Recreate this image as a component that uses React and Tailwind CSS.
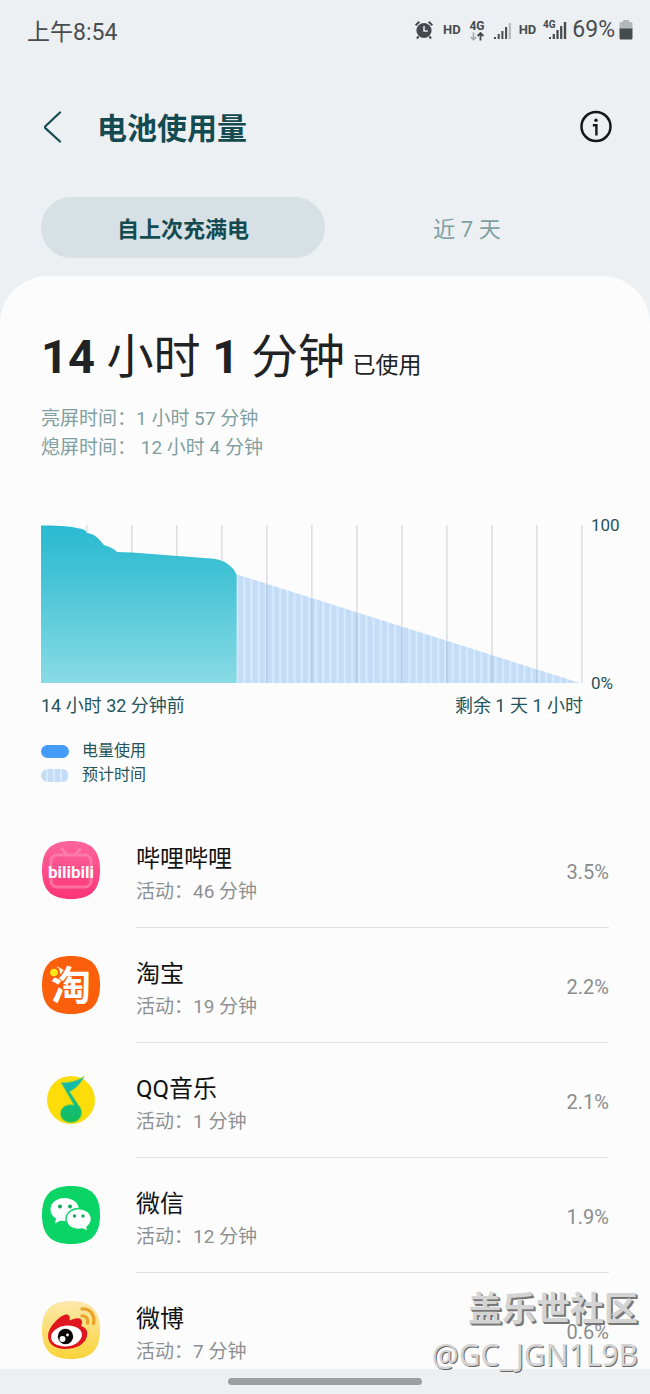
import React from "react";

const INK = "#454a4d";

function AlarmIcon() {
  return (
    <svg className="h-5 w-5" viewBox="0 0 20 20" aria-hidden="true">
      <circle cx="10" cy="10.5" r="7.6" fill={INK} />
      <path d="M1.6 5.2 5.4 1.8M18.4 5.2 14.6 1.8M4.6 16.2 3 18.6M15.4 16.2 17 18.6" stroke={INK} strokeWidth="2" />
      <path d="M10 6v5h3.8" fill="none" stroke="#ecf0f3" strokeWidth="1.5" />
    </svg>
  );
}

function NetworkIcon() {
  return (
    <svg className="h-6 w-[18px]" viewBox="0 -4 18 24" aria-hidden="true">
      <text x="9" y="8" textAnchor="middle" fontFamily="Roboto, sans-serif" fontWeight="700" fontSize="12" fill={INK}>4G</text>
      <path d="M5.5 10.5v7M2.8 15l2.7 2.8L8.2 15" fill="none" stroke="#a3a8ab" strokeWidth="1.6" />
      <path d="M12.5 18.5v-7M9.6 14l2.9-3 2.9 3" fill="none" stroke={INK} strokeWidth="1.8" />
    </svg>
  );
}

function Bars() {
  const tops = [17, 14, 11, 7, 3];
  return tops.map((y, i) => (
    <rect key={i} x={i * 3.7} y={y} width="2" height={19 - y} fill={i === 4 ? "#b2b7ba" : INK} />
  ));
}

function StatusBar() {
  return (
    <div className="flex h-16 items-center justify-between pl-[27px] pr-[17px] text-[23px] text-[#484c4f]">
      <time className="pt-[3px]">上午8:54</time>
      <div className="-mt-1 flex items-center">
        <AlarmIcon />
        <span className="ml-[9px] text-[13px] font-bold">HD</span>
        <span className="ml-[7px] flex"><NetworkIcon /></span>
        <svg className="ml-2 h-5 w-[18px]" viewBox="0 0 18 20" aria-hidden="true">
          <Bars />
        </svg>
        <span className="ml-[7px] text-[13px] font-bold">HD</span>
        <svg className="ml-[7px] h-6 w-6" viewBox="0 -2 24 24" aria-hidden="true">
          <text x="0" y="8" fontFamily="Roboto, sans-serif" fontWeight="700" fontSize="10" fill={INK}>4G</text>
          <rect x="6" y="17" width="2" height="2" fill={INK} />
          <rect x="9.7" y="14" width="2.2" height="5" fill={INK} />
          <rect x="13.4" y="10" width="2.2" height="9" fill={INK} />
          <rect x="17.1" y="6" width="2.2" height="13" fill={INK} />
          <rect x="20.8" y="2" width="2.4" height="17" fill={INK} />
        </svg>
        <span className="ml-[5px] leading-6">69%</span>
        <svg className="ml-1 h-5 w-[14px]" viewBox="0 0 14 20" aria-hidden="true">
          <path d="M4 0h6v2h2q1.5 0 1.5 1.500V9H.5V3.500Q.5 2 2 2h2z" fill="#b2b7ba" />
          <path d="M.5 8.500h13V18q0 1.500-1.500 1.500H2Q.5 19.500.5 18z" fill={INK} />
        </svg>
      </div>
    </div>
  );
}

function Header() {
  return (
    <header className="flex items-center pl-9 pr-9 pt-[31px]">
      <button type="button" aria-label="返回" className="flex h-16 w-8 items-center justify-center">
        <svg className="h-8 w-5" viewBox="0 0 20 32" fill="none" stroke="#144b50" strokeWidth="2.2" strokeLinecap="round" strokeLinejoin="round">
          <path d="M18 1.500 3.600 15q-1.200 1.200 0 2.400L18 30.500" />
        </svg>
      </button>
      <h1 className="ml-[29px] flex-1 pt-1 text-[30px] font-bold leading-10 text-[#144b50]">电池使用量</h1>
      <button type="button" aria-label="信息" className="flex h-16 w-9 items-center justify-center">
        <svg className="h-9 w-9" viewBox="0 0 36 36" fill="none" stroke="#151819">
          <circle cx="18" cy="17.500" r="14.500" strokeWidth="2.500" />
          <path d="M14.800 16.200h3.600v10.300" strokeWidth="2.400" />
          <circle cx="18" cy="11.200" r="1.700" fill="#151819" stroke="none" />
        </svg>
      </button>
    </header>
  );
}

const GRID = Array.from({ length: 12 }, (_, i) => 45.1 * (i + 1));

function UsageChart() {
  return (
    <section className="mt-[63px] text-[#24545a]" aria-label="电量图表">
      <div className="flex">
        <svg className="h-[158px] min-w-0 flex-1" viewBox="0 0 543 158" preserveAspectRatio="none" role="img" aria-label="电量变化">
          <defs>
            <linearGradient id="used" x1="0" y1="0" x2="0" y2="1">
              <stop offset="0" stopColor="#29bad1" />
              <stop offset="0.3" stopColor="#42c2d5" />
              <stop offset="1" stopColor="#89dbe5" />
            </linearGradient>
            <pattern id="stripe" width="7.200" height="158" patternUnits="userSpaceOnUse">
              <rect width="7.200" height="158" fill="#c5dcf7" />
              <rect x="1" width="2" height="158" fill="#d7ebff" />
            </pattern>
          </defs>
          {GRID.map((x) => (
            <rect key={x} x={x} y="0" width="1.500" height="158" fill="#dcdddf" />
          ))}
          <path d="M195 49 540 158H195z" fill="url(#stripe)" />
          {GRID.slice(4, 11).map((x) => (
            <rect key={x} x={x} y={50 + (x - 195) * 0.316} width="1.500" height={108 - (x - 195) * 0.316} fill="#b3cae4" />
          ))}
          <path d="M0 .5C12 .5 28 1 36 3C42 4 45 5 46 8C53 9 54 11 57 13L63 20C69 22 74 24 76 27L91 27.500 170 33.500C184 34 193 42 196 50V158H0z" fill="url(#used)" />
        </svg>
        <div className="-my-3 ml-2 flex w-[59px] flex-col justify-between text-[17px] leading-6">
          <span>100</span>
          <span>0%</span>
        </div>
      </div>
      <div className="mr-[67px] mt-[10px] flex justify-between text-lg leading-[26px]">
        <span>14 小时 32 分钟前</span>
        <span>剩余 1 天 1 小时</span>
      </div>
      <ul className="mt-5 text-base leading-6">
        <li className="flex items-center gap-[13px]">
          <span className="h-[13px] w-7 rounded-full bg-[#449bf8]" />
          电量使用
        </li>
        <li className="flex items-center gap-[13px]">
          <span className="h-[13px] w-7 rounded-full bg-[repeating-linear-gradient(90deg,#c5dcf7_0px,#c5dcf7_5px,#d9ecff_5px,#d9ecff_7px)]" />
          预计时间
        </li>
      </ul>
    </section>
  );
}

const TILE = "M29 0C49 0 58 9 58 29S49 58 29 58 0 49 0 29 9 0 29 0z";

function BilibiliIcon() {
  return (
    <svg className="h-[58px] w-[58px]" viewBox="0 0 58 58" aria-hidden="true">
      <defs>
        <linearGradient id="bili" x1="0" y1="0" x2="0" y2="1">
          <stop offset="0" stopColor="#fb669b" />
          <stop offset="1" stopColor="#fc3477" />
        </linearGradient>
      </defs>
      <path d={TILE} fill="url(#bili)" />
      <g fill="none" stroke="#ff8db4" strokeWidth="3" opacity=".65" strokeLinecap="round">
        <rect x="9" y="14" width="40" height="32" rx="6" />
        <path d="M20 8l5 6M38 8l-5 6" />
      </g>
      <text x="29" y="37" textAnchor="middle" fontFamily="Roboto, sans-serif" fontWeight="700" fontSize="17" fill="#fff">bilibili</text>
    </svg>
  );
}

function TaobaoIcon() {
  return (
    <svg className="h-[58px] w-[58px]" viewBox="0 0 58 58" aria-hidden="true">
      <path d={TILE} fill="#fb5f0c" />
      <text x="29" y="44" textAnchor="middle" fontFamily="'Noto Sans CJK SC', sans-serif" fontWeight="700" fontSize="40" fill="#fff">淘</text>
      <circle cx="12.500" cy="16" r="5.500" fill="#fb5f0c" />
      <circle cx="12" cy="16.500" r="3.800" fill="#ffe818" />
    </svg>
  );
}

function QQMusicIcon() {
  return (
    <svg className="h-[58px] w-[58px]" viewBox="0 0 58 58" aria-hidden="true">
      <defs>
        <linearGradient id="note" x1="0" y1="0" x2="0" y2="1">
          <stop offset="0" stopColor="#16b9bd" />
          <stop offset=".6" stopColor="#10bd7c" />
          <stop offset="1" stopColor="#15bd5b" />
        </linearGradient>
      </defs>
      <circle cx="29" cy="29" r="24" fill="#fddd09" />
      <path d="M19 11.500C29 12 37 9 42 5.500C39 12 34 18 27.500 20.500L38.500 37C42 44 37 51.500 29 51.500C22.500 51.500 18.500 47.500 18.500 42.500C18.500 36 25 32.500 32 34z" fill="url(#note)" stroke="#8fd03b" strokeWidth="1" />
    </svg>
  );
}

function WeChatIcon() {
  return (
    <svg className="h-[58px] w-[58px]" viewBox="0 0 58 58" aria-hidden="true">
      <path d={TILE} fill="#0bd466" />
      <path d="M22.500 12C14.500 12 8.500 17 8.500 23.500C8.500 27 10.500 30.500 14 32.500L13 37.500 18.500 34.500C31 37 37 31 37 23.500C37 17 30.500 12 22.500 12z" fill="#fff" />
      <path d="M36.500 22.500C43.500 22.500 49.500 27 49.500 33C49.500 36.500 47.500 39 45 41L46 45.500 40.500 43C30 45 24 39.500 24 33C24 27 30 22.500 36.500 22.500z" fill="#fff" stroke="#0bd466" strokeWidth="1.500" />
      <g fill="#10ab54">
        <circle cx="18" cy="20.500" r="2" />
        <circle cx="28" cy="20.500" r="2" />
        <circle cx="32.500" cy="30" r="1.700" />
        <circle cx="41" cy="30" r="1.700" />
      </g>
    </svg>
  );
}

function WeiboIcon() {
  return (
    <svg className="h-[58px] w-[58px]" viewBox="0 0 58 58" aria-hidden="true">
      <defs>
        <linearGradient id="weibo" x1="0" y1="0" x2="0" y2="1">
          <stop offset="0" stopColor="#fbe9ad" />
          <stop offset="1" stopColor="#fbd338" />
        </linearGradient>
      </defs>
      <path d={TILE} fill="url(#weibo)" />
      <path d="M20 15C25 11.500 29 14 27.500 19.500C32 17 38 16 39.500 19C40.500 21 40 23 39 25C44 26.500 46 30 45 35C43 44 33 48 23 48C13 48 6 43 6 35C6 28 13 19.500 20 15z" fill="#df1620" />
      <ellipse cx="24.500" cy="35" rx="15.500" ry="10.300" transform="rotate(-8 24.500 35)" fill="#fff" />
      <circle cx="23.500" cy="35.500" r="7.700" fill="#090707" />
      <circle cx="20.500" cy="38" r="3" fill="#fff" />
      <circle cx="25.500" cy="34" r="1.400" fill="#fff" />
      <g fill="none" stroke="#eca12b" strokeWidth="3.300" strokeLinecap="round">
        <path d="M40 8C48 7.500 53.500 14 51.500 22.500" />
        <path d="M40 15C44 14.500 46.500 18 45.500 22" />
      </g>
    </svg>
  );
}

const APPS = [
  { name: "哔哩哔哩", active: "46 分钟", share: "3.5%", Icon: BilibiliIcon },
  { name: "淘宝", active: "19 分钟", share: "2.2%", Icon: TaobaoIcon },
  { name: "QQ音乐", active: "1 分钟", share: "2.1%", Icon: QQMusicIcon },
  { name: "微信", active: "12 分钟", share: "1.9%", Icon: WeChatIcon },
  { name: "微博", active: "7 分钟", share: "0.6%", Icon: WeiboIcon },
];

function AppRow({ name, active, share, Icon }) {
  return (
    <li className="group flex gap-9">
      <div className="pt-7">
        <Icon />
      </div>
      <div className="flex flex-1 items-center justify-between border-b border-[#dfe1e2] pb-5 pt-7 group-last:border-b-0 group-last:pb-[2px]">
        <div>
          <h2 className="text-2xl leading-9 text-[#111313]">{name}</h2>
          <p className="text-[19px] leading-[30px] text-[#8d9091]">活动：{active}</p>
        </div>
        <span className="pb-1 text-xl text-[#8a8d8e]">{share}</span>
      </div>
    </li>
  );
}

export default function App() {
  return (
    <div className="relative flex min-h-screen flex-col bg-[#ecf0f3] font-[Roboto,'Noto_Sans_CJK_SC',sans-serif]">
      <StatusBar />
      <Header />
      <div role="tablist" className="mx-[41px] mt-[38px] grid grid-cols-2 text-[22px]">
        <button type="button" role="tab" aria-selected="true" className="h-[61px] rounded-full bg-[#d7e0e4] pt-1 font-bold text-[#144b50]">自上次充满电</button>
        <button type="button" role="tab" aria-selected="false" className="h-[61px] pt-1 text-[#7f9fa1]">近 7 天</button>
      </div>
      <main className="mt-[18px] flex-1 rounded-t-[48px] bg-[#fcfcfc] pt-12">
        <div className="pl-[41px]">
          <p className="text-[47px] leading-[66px] text-[#202224]">
            <b>14</b> 小时 <b>1</b> 分钟 <span className="-ml-1 text-[23px]">已使用</span>
          </p>
          <div className="mt-[5px] text-[19px] leading-[29px] text-[#7f9fa1]">
            <p>亮屏时间：1 小时 57 分钟</p>
            <p>熄屏时间： 12 小时 4 分钟</p>
          </div>
          <UsageChart />
        </div>
        <ul className="mt-[26px] pl-[42px] pr-[41px]">
          {APPS.map((app) => (
            <AppRow key={app.name} {...app} />
          ))}
        </ul>
      </main>
      <div className="flex h-[25px] items-center justify-center">
        <div className="h-[7px] w-[194px] rounded-full bg-[#9b9fa1]" />
      </div>
      <div className="pointer-events-none absolute bottom-4 right-3 text-right text-[#d4d4d4]">
        <p className="text-[34px] font-bold leading-[46px] [text-shadow:1px_1px_0_#777,2px_2px_0_#777]">盖乐世社区</p>
        <p className="font-['Noto_Sans'] text-[30px] leading-[46px] [text-shadow:1px_1px_0_#666]">@GC_JGN1L9B</p>
      </div>
    </div>
  );
}
